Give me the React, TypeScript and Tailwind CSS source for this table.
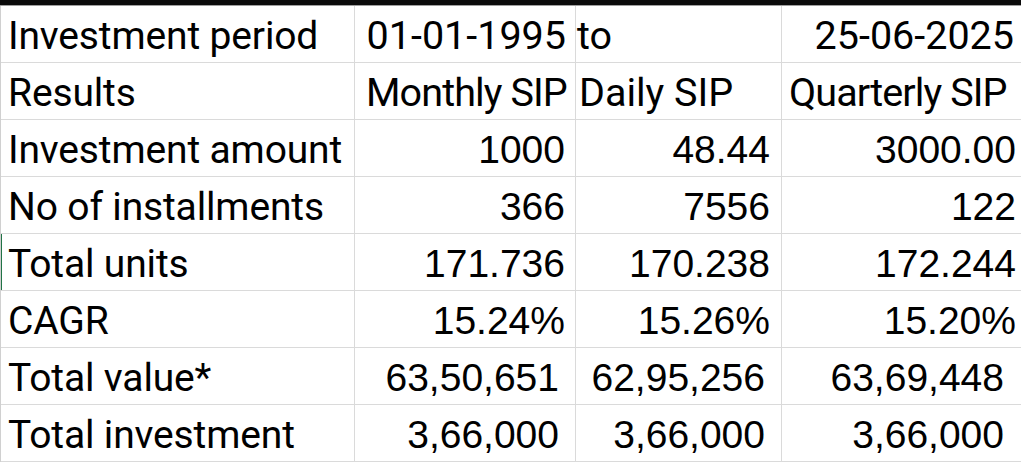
import React from 'react';

type Cell = { v: string; a: 'l' | 'r'; p: string; num?: boolean; x?: string };

// plain numbers sit close to the right edge, grouped ones have a wider gap
const plain = ['pr-[10px]', 'pr-[11px]', 'pr-[5px]'];
const grouped = ['pr-[16px]', 'pr-[16px]', 'pr-[17px]'];

const nums = (vals: string[], pads: string[]): Cell[] =>
  vals.map((v, k) => ({ v, a: 'r', p: pads[k], num: true }));

const rows: { label: string; cells: Cell[] }[] = [
  {
    label: 'Investment period',
    cells: [
      { v: '01-01-1995', a: 'r', p: 'pr-[9px]' },
      { v: 'to', a: 'l', p: 'pl-[1px]' },
      { v: '25-06-2025', a: 'r', p: 'pr-[7px]' },
    ],
  },
  {
    label: 'Results',
    cells: [
      { v: 'Monthly SIP', a: 'l', p: 'pl-[11px]', x: 'tracking-[-0.9px]' },
      { v: 'Daily SIP', a: 'l', p: 'pl-[3px]' },
      { v: 'Quarterly SIP', a: 'l', p: 'pl-[7px]', x: 'tracking-[-0.9px]' },
    ],
  },
  { label: 'Investment amount', cells: nums(['1000', '48.44', '3000.00'], plain) },
  { label: 'No of installments', cells: nums(['366', '7556', '122'], plain) },
  { label: 'Total units', cells: nums(['171.736', '170.238', '172.244'], plain) },
  { label: 'CAGR', cells: nums(['15.24%', '15.26%', '15.20%'], plain) },
  { label: 'Total value*', cells: nums(['63,50,651', '62,95,256', '63,69,448'], grouped) },
  { label: 'Total investment', cells: nums(['3,66,000', '3,66,000', '3,66,000'], grouped) },
];

export default function App() {
  return (
    <div className="w-[1021px] h-[464px] bg-white overflow-hidden text-black">
      <div className="h-[5px] bg-[#0a0a0a] border-b border-[#9e9e9e] box-content" />
      <div className="grid grid-cols-[354px_221px_206px_1fr] border-l border-[#d0d0d0]">
        {rows.map((r, i) => (
          <React.Fragment key={i}>
            <div
              className={`h-[57px] flex items-end pl-[7px] pb-[7px] border-b border-r border-[#dadada] text-[39px] leading-[38px] tracking-[-0.15px] font-['Roboto',sans-serif] whitespace-nowrap ${i === 4 ? 'shadow-[inset_1px_0_0_#217346]' : ''}`}
            >
              {r.label}
            </div>
            {r.cells.map((c, j) => (
              <div
                key={j}
                className={`h-[57px] flex items-end pb-[7px] border-b border-[#dadada] whitespace-nowrap overflow-visible ${j < 2 ? 'border-r' : ''} ${c.a === 'r' ? 'justify-end' : 'justify-start'} ${c.p} ${c.x ?? ''} ${c.num ? "font-['Liberation_Sans',Arial,sans-serif] text-[39px] leading-[38px]" : "font-['Roboto',sans-serif] text-[39.5px] leading-[38px]"}`}
              >
                {c.v}
              </div>
            ))}
          </React.Fragment>
        ))}
      </div>
    </div>
  );
}
